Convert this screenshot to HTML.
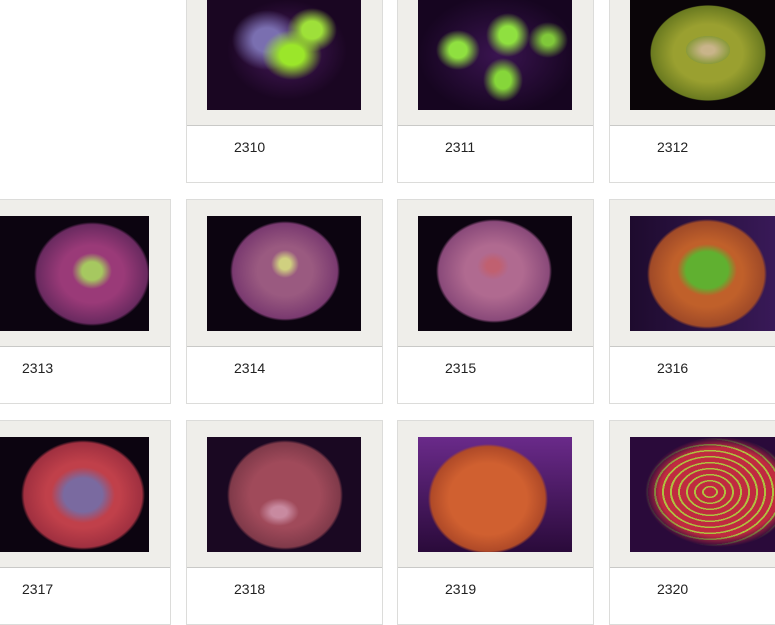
<!DOCTYPE html>
<html><head><style>
html,body{margin:0;padding:0;width:775px;height:625px;overflow:hidden;background:#fff;font-family:"Liberation Sans",Arial,sans-serif}
.c{position:absolute;width:195px;height:203px;border:1px solid #dcdcda;background:#fff;box-sizing:content-box}
.f{position:absolute;left:0;top:0;width:195px;height:146px;background:#efeeea;border-bottom:1px solid #c9c9c7}
.i{position:absolute;left:20px;top:16px;width:154px;height:115px;background:#12041a;overflow:hidden}
.l{position:absolute;left:47px;top:140px;font-size:14px;color:#222}
.l{top:160px}
</style></head><body>

<!-- row 1 -->
<div class="c" style="left:186px;top:-22px"><div class="f"><div class="i" style="background:radial-gradient(ellipse 30px 25px at 85px 60px,#9be62a 40%,transparent 100%),radial-gradient(ellipse 25px 22px at 105px 35px,#9ee03a 40%,transparent 100%),radial-gradient(ellipse 35px 30px at 60px 45px,#7a6fb0 40%,transparent 100%),radial-gradient(ellipse 60px 50px at 80px 55px,#4a1a60,transparent),#1a0622"></div></div><div class="l">2310</div></div>
<div class="c" style="left:397px;top:-22px"><div class="f"><div class="i" style="background:radial-gradient(ellipse 22px 20px at 40px 55px,#8fe040 40%,transparent 100%),radial-gradient(ellipse 22px 22px at 90px 40px,#8fe040 40%,transparent 100%),radial-gradient(ellipse 20px 22px at 85px 85px,#86d63a 40%,transparent 100%),radial-gradient(ellipse 20px 18px at 130px 45px,#80c83a 30%,transparent 100%),radial-gradient(ellipse 80px 60px at 80px 60px,#3a1450,transparent),#160520"></div></div><div class="l">2311</div></div>
<div class="c" style="left:609px;top:-22px"><div class="f"><div class="i" style="background:radial-gradient(ellipse 22px 14px at 78px 55px,#c9b48a 30%,#8a9a3a 100%,transparent 101%),radial-gradient(ellipse 58px 48px at 78px 58px,#9aa030 60%,#6a7a20 98%,transparent 100%),#0a0508"></div></div><div class="l">2312</div></div>

<!-- row 2 -->
<div class="c" style="left:-26px;top:199px"><div class="f"><div class="i" style="background:radial-gradient(ellipse 20px 18px at 97px 55px,#a6c860 50%,transparent 100%),radial-gradient(ellipse 58px 52px at 97px 58px,#9a3a78 55%,#6a2a60 95%,transparent 100%),#0c0410"></div></div><div class="l">2313</div></div>
<div class="c" style="left:186px;top:199px"><div class="f"><div class="i" style="background:radial-gradient(ellipse 14px 14px at 78px 48px,#d0d080 40%,transparent 100%),radial-gradient(ellipse 55px 50px at 78px 55px,#9a5a80 50%,#7a3a70 95%,transparent 100%),#0c0410"></div></div><div class="l">2314</div></div>
<div class="c" style="left:397px;top:199px"><div class="f"><div class="i" style="background:radial-gradient(ellipse 16px 14px at 75px 50px,#c06070 40%,transparent 100%),radial-gradient(ellipse 58px 52px at 76px 55px,#b06a90 50%,#8a4a7a 95%,transparent 100%),#0c0410"></div></div><div class="l">2315</div></div>
<div class="c" style="left:609px;top:199px"><div class="f"><div class="i" style="background:radial-gradient(ellipse 30px 26px at 77px 54px,#60b030 70%,transparent 100%),radial-gradient(ellipse 60px 55px at 77px 58px,#c0602a 60%,#a04a28 95%,transparent 100%),linear-gradient(90deg,#1e0b2e,#3a1a5a)"></div></div><div class="l">2316</div></div>

<!-- row 3 -->
<div class="c" style="left:-26px;top:420px"><div class="f"><div class="i" style="background:radial-gradient(ellipse 32px 28px at 88px 58px,#7a6aa0 60%,transparent 100%),radial-gradient(ellipse 62px 55px at 88px 58px,#c0404a 60%,#a03040 95%,transparent 100%),#0c0410"></div></div><div class="l">2317</div></div>
<div class="c" style="left:186px;top:420px"><div class="f"><div class="i" style="background:radial-gradient(ellipse 20px 14px at 72px 75px,#c88aa0 40%,transparent 100%),radial-gradient(ellipse 58px 55px at 78px 58px,#a04a5a 60%,#803a4a 95%,transparent 100%),#1a0822"></div></div><div class="l">2318</div></div>
<div class="c" style="left:397px;top:420px"><div class="f"><div class="i" style="background:radial-gradient(ellipse 60px 55px at 70px 62px,#d06030 65%,#b04a28 95%,transparent 100%),linear-gradient(180deg,#6a2a8a,#2a0a3a)"></div></div><div class="l">2319</div></div>
<div class="c" style="left:609px;top:420px"><div class="f"><div class="i" style="background:repeating-radial-gradient(ellipse at 80px 55px,#c02a40 0 6px,#b0c040 6px 8px),#c02a40;"><div style="position:absolute;inset:0;background:radial-gradient(ellipse 75px 55px at 90px 55px,transparent 80%,#2a0a3a 100%)"></div></div></div><div class="l">2320</div></div>

</body></html>
